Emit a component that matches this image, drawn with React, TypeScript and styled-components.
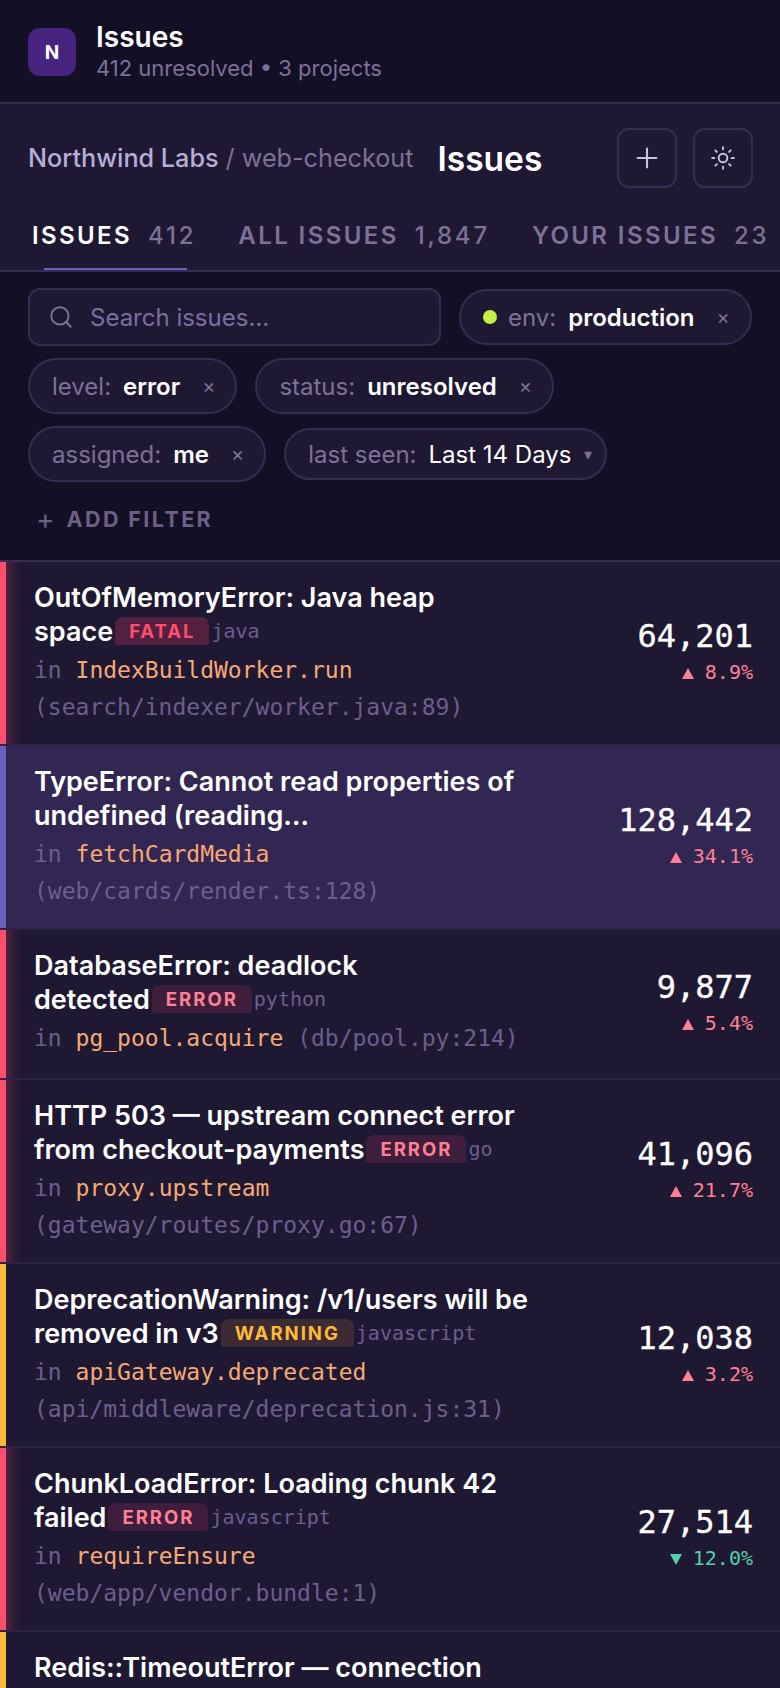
import styled, { createGlobalStyle } from "styled-components";
import { Plus, Search, Sun } from "lucide-react";

const sans = `Inter, "Noto Sans", sans-serif`;
const mono = `"DejaVu Sans Mono", "Liberation Mono", monospace`;

const GlobalStyle = createGlobalStyle`
  html, body {
    margin: 0;
    padding: 0;
    background: #130f24;
  }
  * {
    box-sizing: border-box;
  }
`;

const Page = styled.div`
  width: 780px;
  height: 1688px;
  overflow: hidden;
  font-family: ${sans};
  color: #fff;
  background: #130f24;
`;

const AppBar = styled.header`
  height: 104px;
  padding: 28px 28px 0;
  display: flex;
  gap: 20px;
  border-bottom: 2px solid #352c52;
`;

const Logo = styled.div`
  width: 48px;
  height: 48px;
  border-radius: 12px;
  background: #45237f;
  display: flex;
  align-items: center;
  justify-content: center;
  font-size: 19px;
  font-weight: 700;
`;

const AppTitle = styled.div`
  font-size: 28px;
  font-weight: 600;
  line-height: 34px;
  margin-top: -8px;
`;

const AppSub = styled.div`
  font-size: 22px;
  line-height: 28px;
  color: #7d7198;
`;

const Head = styled.section`
  height: 168px;
  background: #1f1833;
  border-bottom: 2px solid #352c52;
`;

const HeadTop = styled.div`
  display: flex;
  align-items: center;
  padding: 24px 27px 0 28px;
`;

const Crumb = styled.div`
  font-size: 25.2px;
  color: #7d7198;
  b {
    font-weight: 500;
    color: #b6aed6;
  }
`;

const HeadTitle = styled.h1`
  margin: 2px 0 0 24px;
  font-size: 33.5px;
  font-weight: 600;
  flex: 1;
`;

const IconButton = styled.button`
  width: 60px;
  height: 60px;
  margin-left: 16px;
  border: 2px solid #352c52;
  border-radius: 12px;
  background: transparent;
  color: #c8c0e0;
  display: flex;
  align-items: center;
  justify-content: center;
  padding: 0;
`;

const Tabs = styled.nav`
  display: flex;
  gap: 42px;
  padding-left: 32px;
  margin-top: 16px;
  white-space: nowrap;
`;

const Tab = styled.div<{ $active?: boolean }>`
  position: relative;
  font-size: 24px;
  font-weight: 600;
  letter-spacing: 2.4px;
  line-height: 64px;
  height: 66px;
  color: ${(p) => (p.$active ? "#fff" : "#7d7198")};
  span {
    margin-left: 16px;
    font-weight: 500;
    letter-spacing: 2.8px;
    color: #7d7198;
  }
  ${(p) =>
    p.$active &&
    `&::after {
      content: "";
      position: absolute;
      left: 12px;
      right: 9px;
      bottom: 0;
      height: 2px;
      background: #6b5fbf;
    }`}
`;

const Filters = styled.section`
  height: 290px;
  padding: 16px 28px 0;
  display: flex;
  flex-wrap: wrap;
  align-items: center;
  align-content: flex-start;
  gap: 12px 18px;
  border-bottom: 2px solid #352c52;
`;

const SearchBox = styled.div`
  width: 413px;
  height: 58px;
  background: #1f1833;
  border: 2px solid #352c52;
  border-radius: 12px;
  display: flex;
  align-items: center;
  gap: 16px;
  padding: 0 18px;
  font-size: 24px;
  color: #7a6f9e;
`;

const Chip = styled.div<{ $select?: boolean }>`
  height: ${(p) => (p.$select ? "52px" : "56px")};
  padding: 0 ${(p) => (p.$select ? "13px" : "20px")} 0 22px;
  border: 2px solid #352c52;
  border-radius: 28px;
  background: #1f1833;
  display: flex;
  align-items: center;
  font-size: 24px;
  color: #7d7198;
  white-space: nowrap;
`;

const ChipValue = styled.span<{ $plain?: boolean }>`
  margin-left: 12px;
  color: #fff;
  font-weight: ${(p) => (p.$plain ? 400 : 600)};
`;

const Close = styled.span`
  margin-left: 22px;
  font-size: 20px;
  color: #7d7198;
`;

const Dot = styled.span`
  width: 14px;
  height: 14px;
  border-radius: 50%;
  background: #c4f042;
  margin-right: 11px;
`;

const Caret = styled.span`
  margin-left: 13px;
  font-size: 16px;
  color: #7d7198;
`;

const AddFilter = styled.div`
  width: 100%;
  margin: 11px 0 0 8px;
  display: flex;
  align-items: center;
  gap: 12px;
  font-size: 21.5px;
  font-weight: 700;
  letter-spacing: 2.4px;
  line-height: 28px;
  color: #6e5f88;
`;

const AddPlus = styled.span`
  font-weight: 400;
  font-size: 28px;
  letter-spacing: 0;
`;

const List = styled.div`
  display: flex;
  flex-direction: column;
  gap: 2px;
  background: #2c2444;
`;

const Row = styled.article<{ $bar: string; $glow?: boolean; $active?: boolean; $short?: boolean }>`
  flex: none;
  height: ${(p) => (p.$short ? "148px" : "182px")};
  padding: 19px 27px 0 28px;
  display: flex;
  justify-content: space-between;
  background: ${(p) => (p.$glow ? "linear-gradient(90deg, rgba(255, 77, 109, 0.2), transparent 14px), " : "")}
    ${(p) => (p.$active ? "#322653" : "#1f1833")};
  border-left: 6px solid ${(p) => p.$bar};
`;

const RowMain = styled.div`
  width: 510px;
`;

const TitleLine = styled.div`
  display: flex;
  align-items: center;
  height: 33.5px;
  font-size: 27px;
  font-weight: 600;
  white-space: nowrap;
`;

const Level = styled.span<{ $fg: string; $bg: string }>`
  margin: 0 2px;
  padding: 0 14px;
  height: 28px;
  border-radius: 8px 8px 3px 3px;
  background: ${(p) => p.$bg};
  color: ${(p) => p.$fg};
  font-size: 18.5px;
  font-weight: 700;
  letter-spacing: 2px;
  line-height: 28px;
`;

const Lang = styled.span`
  font-family: ${mono};
  font-size: 20px;
  font-weight: 400;
  color: #6b5f8c;
`;

const Meta = styled.div`
  margin-top: 4px;
  font-family: ${mono};
  font-size: 23px;
  line-height: 36.5px;
  color: #6b5f8c;
  em {
    font-style: normal;
    color: #f6a974;
  }
`;

const Stats = styled.div`
  text-align: right;
  align-self: center;
  margin-top: -24px;
`;

const Count = styled.div`
  font-family: ${mono};
  font-size: 32px;
  line-height: 40px;
  -webkit-text-stroke: 0.3px #fff;
`;

const Delta = styled.div<{ $down?: boolean }>`
  margin-top: 2px;
  font-family: ${mono};
  font-size: 20px;
  line-height: 28px;
  color: ${(p) => (p.$down ? "#4fd1a5" : "#ff8095")};
`;

const Arrow = styled.span<{ $down?: boolean }>`
  display: inline-block;
  margin-right: 11px;
  border-left: 6px solid transparent;
  border-right: 6px solid transparent;
  border-${(p) => (p.$down ? "top" : "bottom")}: 11px solid currentColor;
`;

const RED = "#ff4d6d";
const AMBER = "#ffb938";
const levels: Record<string, { fg: string; bg: string }> = {
  FATAL: { fg: "#ff4d6d", bg: "#53213f" },
  ERROR: { fg: "#ff8095", bg: "#3f1e3d" },
  WARNING: { fg: "#ffb938", bg: "#3d2b33" },
};

type Issue = {
  lines: [string, string];
  level?: string;
  lang?: string;
  fn?: string;
  path?: string;
  count?: string;
  delta?: string;
  down?: boolean;
  bar: string;
  glow?: boolean;
  active?: boolean;
  short?: boolean;
};

const issues: Issue[] = [
  { lines: ["OutOfMemoryError: Java heap", "space"], level: "FATAL", lang: "java", fn: "IndexBuildWorker.run", path: "(search/indexer/worker.java:89)", count: "64,201", delta: "8.9%", bar: RED, glow: true },
  { lines: ["TypeError: Cannot read properties of", "undefined (reading…"], fn: "fetchCardMedia", path: "(web/cards/render.ts:128)", count: "128,442", delta: "34.1%", bar: "#6b5fbf", active: true },
  { lines: ["DatabaseError: deadlock", "detected"], level: "ERROR", lang: "python", fn: "pg_pool.acquire", path: "(db/pool.py:214)", count: "9,877", delta: "5.4%", bar: RED, glow: true, short: true },
  { lines: ["HTTP 503 — upstream connect error", "from checkout-payments"], level: "ERROR", lang: "go", fn: "proxy.upstream", path: "(gateway/routes/proxy.go:67)", count: "41,096", delta: "21.7%", bar: RED, glow: true },
  { lines: ["DeprecationWarning: /v1/users will be", "removed in v3"], level: "WARNING", lang: "javascript", fn: "apiGateway.deprecated", path: "(api/middleware/deprecation.js:31)", count: "12,038", delta: "3.2%", bar: AMBER },
  { lines: ["ChunkLoadError: Loading chunk 42", "failed"], level: "ERROR", lang: "javascript", fn: "requireEnsure", path: "(web/app/vendor.bundle:1)", count: "27,514", delta: "12.0%", down: true, bar: RED, glow: true },
  { lines: ["Redis::TimeoutError — connection", ""], bar: AMBER },
];

export default function App() {
  return (
    <Page>
      <GlobalStyle />
      <AppBar>
        <Logo>N</Logo>
        <div>
          <AppTitle>Issues</AppTitle>
          <AppSub>412 unresolved • 3 projects</AppSub>
        </div>
      </AppBar>
      <Head>
        <HeadTop>
          <Crumb>
            <b>Northwind Labs</b> / web-checkout
          </Crumb>
          <HeadTitle>Issues</HeadTitle>
          <IconButton>
            <Plus size={32} strokeWidth={1.6} />
          </IconButton>
          <IconButton>
            <Sun size={26} strokeWidth={1.8} />
          </IconButton>
        </HeadTop>
        <Tabs>
          <Tab $active>ISSUES<span>412</span></Tab>
          <Tab>ALL ISSUES<span>1,847</span></Tab>
          <Tab>YOUR ISSUES<span>23</span></Tab>
        </Tabs>
      </Head>
      <Filters>
        <SearchBox>
          <Search size={26} strokeWidth={1.8} />
          Search issues…
        </SearchBox>
        <Chip>
          <Dot />
          env:<ChipValue>production</ChipValue>
          <Close>×</Close>
        </Chip>
        <Chip>
          level:<ChipValue>error</ChipValue>
          <Close>×</Close>
        </Chip>
        <Chip>
          status:<ChipValue>unresolved</ChipValue>
          <Close>×</Close>
        </Chip>
        <Chip>
          assigned:<ChipValue>me</ChipValue>
          <Close>×</Close>
        </Chip>
        <Chip $select>
          last seen:<ChipValue $plain>Last 14 Days</ChipValue>
          <Caret>▾</Caret>
        </Chip>
        <AddFilter>
          <AddPlus>+</AddPlus>ADD FILTER
        </AddFilter>
      </Filters>
      <List>
        {issues.map((it) => (
          <Row key={it.lines[0]} $bar={it.bar} $glow={it.glow} $active={it.active} $short={it.short}>
            <RowMain>
              <TitleLine>{it.lines[0]}</TitleLine>
              <TitleLine>
                {it.lines[1]}
                {it.level && (
                  <Level $fg={levels[it.level].fg} $bg={levels[it.level].bg}>
                    {it.level}
                  </Level>
                )}
                {it.lang && <Lang>{it.lang}</Lang>}
              </TitleLine>
              {it.fn && (
                <Meta>
                  in <em>{it.fn}</em> {it.path}
                </Meta>
              )}
            </RowMain>
            {it.count && (
              <Stats>
                <Count>{it.count}</Count>
                <Delta $down={it.down}>
                  <Arrow $down={it.down} />
                  {it.delta}
                </Delta>
              </Stats>
            )}
          </Row>
        ))}
      </List>
    </Page>
  );
}
